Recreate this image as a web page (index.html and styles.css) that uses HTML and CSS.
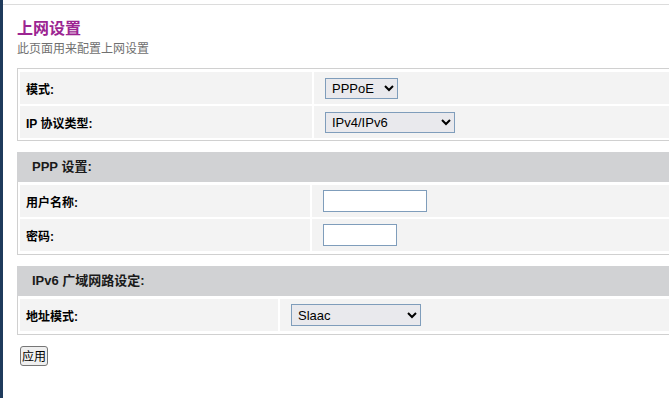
FILE: index.html
```html
<!DOCTYPE html>
<html lang="zh-CN">
<head>
<meta charset="utf-8"/>
<title>上网设置</title>
<link rel="stylesheet" href="styles.css">
</head>
<body>
  <div class="sidebar"></div>
  <div class="main">
    <h1 class="page-title">上网设置</h1>
    <p class="page-desc">此页面用来配置上网设置</p>

    <div class="box box-first cols-wan">
      <div class="label">模式:</div>
      <div class="value">
        <select class="sel sel-mode">
          <option>PPPoE</option>
          <option>DHCP</option>
          <option>Static</option>
        </select>
      </div>
      <div class="label">IP 协议类型:</div>
      <div class="value">
        <select class="sel sel-proto">
          <option>IPv4/IPv6</option>
          <option>IPv4</option>
          <option>IPv6</option>
        </select>
      </div>
    </div>

    <div class="section-head">PPP 设置:</div>
    <div class="box box-open cols-ppp">
      <div class="label">用户名称:</div>
      <div class="value"><input type="text" class="txt txt-user"></div>
      <div class="label">密码:</div>
      <div class="value"><input type="password" class="txt txt-pass"></div>
    </div>

    <div class="section-head">IPv6 广域网路设定:</div>
    <div class="box box-open cols-v6">
      <div class="label">地址模式:</div>
      <div class="value">
        <select class="sel sel-addr">
          <option>Slaac</option>
          <option>DHCPv6</option>
        </select>
      </div>
    </div>

    <button class="apply">应用</button>
  </div>
</body>
</html>
```

FILE: styles.css
```css
html, body {
  height: 100%;
}
body {
  margin: 0;
  display: flex;
  background: #fff;
  font-family: "Liberation Sans", "Noto Sans CJK SC", sans-serif;
  color: #000;
}
.sidebar {
  width: 3px;
  flex: none;
  background: #1f3b5c;
}
.main {
  flex: 1;
  margin-top: 4px;
  border-top: 1px solid #dcdcdc;
  padding-left: 14px;
  overflow: hidden;
}
.page-title {
  margin: 14px 0 0;
  font-size: 16px;
  line-height: 20px;
  font-weight: bold;
  color: #9c2592;
}
.page-desc {
  margin: 3px 0 0;
  font-size: 12px;
  line-height: 14px;
  color: #707070;
}
.box {
  display: grid;
  gap: 2px;
  margin-right: -12px;
  padding: 3px 0 3px 2px;
  border: 1px solid #d0d0d0;
}
.box-first {
  margin-top: 12px;
  padding-bottom: 2px;
}
.box-open {
  border-top: none;
}
.cols-wan { grid-template-columns: 292px 1fr; }
.cols-ppp { grid-template-columns: 290px 1fr; }
.cols-v6  { grid-template-columns: 258px 1fr; }
.label, .value {
  height: 32px;
  display: flex;
  align-items: center;
  background: #f3f3f3;
}
.label {
  padding-left: 6px;
  font-size: 12px;
  font-weight: bold;
}
.value {
  padding-left: 11px;
}
.section-head {
  margin: 11px -12px 0 0;
  height: 30px;
  line-height: 30px;
  padding-left: 15px;
  background: #d1d2d4;
  font-size: 13px;
  font-weight: bold;
  color: #1a1a1a;
}
.sel {
  height: 21px;
  padding: 0 2px;
  border: 1px solid #7f9dbb;
  border-radius: 0;
  background-color: #e9e9ed;
  font-family: "Liberation Sans", sans-serif;
  font-size: 13px;
  color: #000;
}
.sel-mode  { width: 73px; }
.sel-proto { width: 130px; }
.sel-addr  { width: 130px; height: 22px; }
.txt {
  height: 22px;
  box-sizing: border-box;
  border: 1px solid #7f9dbb;
  background: #fff;
  padding: 0 3px;
  font-size: 13px;
}
.txt-user { width: 104px; }
.txt-pass { width: 74px; }
.apply {
  margin: 11px 0 0 3px;
  width: 28px;
  height: 20px;
  padding: 0;
  border: 1px solid #767676;
  border-radius: 3px;
  background: #efefef;
  font-family: "Noto Sans CJK SC", sans-serif;
  font-size: 12px;
  line-height: 16px;
  color: #000;
}
```
